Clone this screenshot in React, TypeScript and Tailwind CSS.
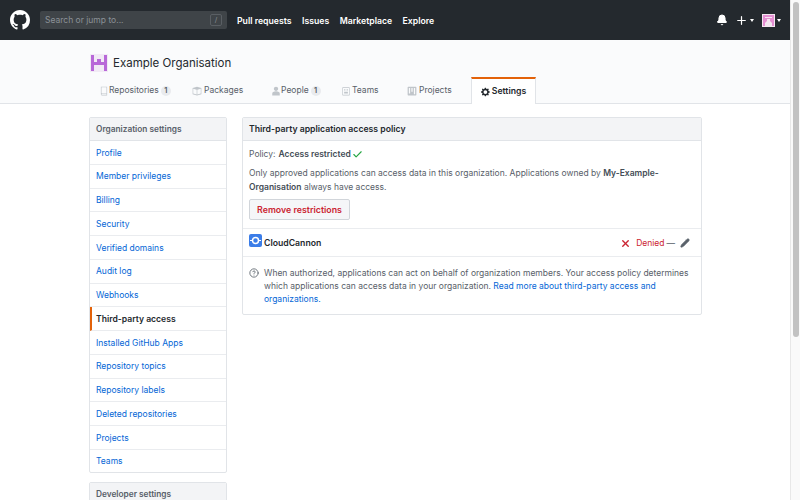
import { Bell, Check, CircleHelp, Pencil, Plus, X } from 'lucide-react'

const navItems = ['Pull requests', 'Issues', 'Marketplace', 'Explore']

const settingsItems = [
  'Profile',
  'Member privileges',
  'Billing',
  'Security',
  'Verified domains',
  'Audit log',
  'Webhooks',
  'Third-party access',
  'Installed GitHub Apps',
  'Repository topics',
  'Repository labels',
  'Deleted repositories',
  'Projects',
  'Teams',
]

function GithubMark() {
  return (
    <svg viewBox="0 0 16 16" className="w-5 h-5 fill-white">
      <path d="M8 0C3.58 0 0 3.58 0 8c0 3.54 2.29 6.53 5.47 7.59.4.07.55-.17.55-.38 0-.19-.01-.82-.01-1.49-2.01.37-2.53-.49-2.69-.94-.09-.23-.48-.94-.82-1.13-.28-.15-.68-.52-.01-.53.63-.01 1.08.58 1.23.82.72 1.21 1.87.87 2.33.66.07-.52.28-.87.51-1.07-1.78-.2-3.64-.89-3.64-3.95 0-.87.31-1.59.82-2.15-.08-.2-.36-1.02.08-2.12 0 0 .67-.21 2.2.82.64-.18 1.32-.27 2-.27s1.36.09 2 .27c1.53-1.04 2.2-.82 2.2-.82.44 1.1.16 1.92.08 2.12.51.56.82 1.27.82 2.15 0 3.07-1.87 3.75-3.65 3.95.29.25.54.73.54 1.48 0 1.07-.01 1.93-.01 2.2 0 .21.15.46.55.38A8.01 8.01 0 0 0 16 8c0-4.42-3.58-8-8-8z" />
    </svg>
  )
}

function Caret() {
  return <span className="ml-[2px] mt-[1px] border-x-[2.5px] border-t-[3px] border-x-transparent border-t-white" />
}

function TabIcon({ d }: { d: string }) {
  return (
    <svg viewBox="0 0 16 16" className="w-[10px] h-[10px] fill-[#c0c5ca] shrink-0">
      <path fillRule="evenodd" d={d} />
    </svg>
  )
}

function Counter({ n }: { n: number }) {
  return (
    <span className="ml-[2px] w-[10px] h-[10px] rounded-full bg-[#e9ebee] text-[7.5px] font-semibold leading-[10px] text-center text-[#586069]">
      {n}
    </span>
  )
}

const repoIcon = 'M3 1h10v14H5a2 2 0 0 1-2-2V1zm1 1v9h8V2H4zm1 10a1 1 0 0 0 0 2h7v-2H5z'
const packageIcon = 'M1 3l7-2 7 2v10l-7 2-7-2V3zm1 1.5V12l5.5 1.6V6L2 4.5zm12 0L8.500 6v7.600L14 12V4.500z'
const peopleIcon = 'M8 1a3.500 3.500 0 0 1 3.500 3.500C11.500 6.500 10 8 8 8S4.500 6.500 4.500 4.500A3.500 3.500 0 0 1 8 1zM2 15v-3c0-2 2-3.500 6-3.500s6 1.500 6 3.500v3H2z'
const teamsIcon = 'M3 2h10a1 1 0 0 1 1 1v11a1 1 0 0 1-1 1H3a1 1 0 0 1-1-1V3a1 1 0 0 1 1-1zm0 1v11h10V3H3zm2 2h2v2H5V5zm4 0h2v2H9V5zM5 9h6v3H5V9z'
const projectsIcon = 'M2 1h12a1 1 0 0 1 1 1v12a1 1 0 0 1-1 1H2a1 1 0 0 1-1-1V2a1 1 0 0 1 1-1zm1 2v9h2V3H3zm4 0v6h2V3H7zm4 0v10h2V3h-2z'

export default function App() {
  return (
    <div className="flex h-[500px] w-[800px] overflow-hidden bg-white font-['Inter',sans-serif] text-[8.5px] leading-[13.3px] text-[#24292e]">
      <div className="w-[790px] shrink-0">
        {/* Top nav */}
        <header className="h-10 bg-[#24292e] flex items-center pl-[10px] pr-[9px] text-white">
          <GithubMark />
          <div className="ml-[10px] w-[187px] h-[18px] rounded-[2px] bg-[#3f4448] flex items-center justify-between px-[5px] text-[#8b9197]">
            <span className="pt-[2px]">Search or jump to...</span>
            <span className="w-3 h-3 rounded-[2px] border border-[#5a5f64] text-[7px] leading-[10px] text-center">/</span>
          </div>
          <nav className="ml-[10px] mt-[3px] flex gap-[10.5px] font-semibold text-[8.7px]">
            {navItems.map((item) => (
              <span key={item}>{item}</span>
            ))}
          </nav>
          <div className="ml-auto flex items-center">
            <Bell className="w-3 h-3 fill-white" strokeWidth={2} />
            <Plus className="ml-[7px] w-[13px] h-[13px]" strokeWidth={2.25} />
            <Caret />
            <svg viewBox="0 0 13 13" className="ml-[8px] w-[13px] h-[13px]">
              <rect width="13" height="13" fill="#f4e6f0" />
              <path fill="#e58fd2" d="M1 1h11v11h-2V9L8 7V5H5v2L3 9v3H1z" />
              <rect x="3" y="3" width="7" height="1" fill="#f8e8f4" />
            </svg>
            <Caret />
          </div>
        </header>

        {/* Org subhead */}
        <div className="h-[64px] bg-[#fafbfc] border-b border-[#e1e4e8] pl-[90px]">
          <div className="flex items-center pt-[10px] h-[36px]">
            <svg viewBox="0 0 18 18" className="w-[18px] h-[18px]">
              <rect width="18" height="18" fill="#f1eaf5" />
              <path fill="#b868d8" d="M1 1h3v7h3V5h4v3h3V1h3v16h-3v-6H4v6H1z" />
            </svg>
            <span className="ml-[5px] text-[11.5px] leading-[18px] text-[#24292e]">Example Organisation</span>
          </div>
          <div className="flex items-end h-[27px] text-[#586069]">
            <div className="flex items-center h-[27px] pl-[9px] pt-[3px] w-[102px]">
              <TabIcon d={repoIcon} />
              <span>Repositories</span>
              <Counter n={1} />
            </div>
            <div className="flex items-center h-[27px] pt-[3px] w-[79px]">
              <TabIcon d={packageIcon} />
              <span className="ml-[2px]">Packages</span>
            </div>
            <div className="flex items-center h-[27px] pt-[3px] w-[70px]">
              <TabIcon d={peopleIcon} />
              <span>People</span>
              <Counter n={1} />
            </div>
            <div className="flex items-center h-[27px] pt-[3px] w-[66px]">
              <TabIcon d={teamsIcon} />
              <span className="ml-[1px]">Teams</span>
            </div>
            <div className="flex items-center h-[27px] pt-[3px] w-[64px]">
              <TabIcon d={projectsIcon} />
              <span className="ml-[2px]">Projects</span>
            </div>
            <div className="relative z-10 flex items-center justify-center h-[27px] w-[65px] -mb-px bg-white border-x border-[#e1e4e8] border-t-2 border-t-[#e36209] font-semibold text-[8.7px] text-[#24292e]">
              <svg viewBox="0 0 16 16" className="w-[10px] h-[10px] fill-[#24292e] mr-[1px]">
                <path
                  fillRule="evenodd"
                  d="M14 8.770V7.170l-1.940-.640-.450-1.090.880-1.840-1.130-1.130-1.810.910-1.090-.450-.690-1.920H6.170L5.540 2.950l-1.100.450-1.830-.880-1.130 1.130.910 1.810-.450 1.090L0.020 7.230V8.830l1.940.640.450 1.090-.880 1.840 1.130 1.130 1.810-.910 1.090.450.690 1.920h1.590l.630-1.940 1.100-.450 1.840.880 1.130-1.130-.920-1.810.470-1.090L14 8.770zM7 11a3 3 0 1 1 0-6 3 3 0 0 1 0 6z"
                />
              </svg>
              Settings
            </div>
          </div>
        </div>

        <div className="flex gap-[15px] pl-[89px] pt-[13px]">
          {/* Sidebar */}
          <aside className="w-[138px] shrink-0">
            <div className="border border-[#e1e4e8] rounded-[2px] overflow-hidden">
              <div className="h-[23px] pt-[2px] bg-[#f3f4f6] border-b border-[#e1e4e8] px-[6px] flex items-center font-semibold text-[8.3px] text-[#586069]">
                Organization settings
              </div>
              {settingsItems.map((item) => {
                const active = item === 'Third-party access'
                return (
                  <div
                    key={item}
                    className={
                      active
                        ? 'h-[23.75px] pt-[2px] flex items-center pl-[4px] border-l-2 border-l-[#e36209] border-b border-b-[#eaecef] font-semibold text-[8.6px] text-[#24292e]'
                        : 'h-[23.75px] pt-[2px] flex items-center px-[6px] border-b border-[#eaecef] last:border-b-0 last:h-[22.5px] text-[#0366d6]'
                    }
                  >
                    {item}
                  </div>
                )
              })}
            </div>
            <div className="mt-[9px] border border-[#e1e4e8] rounded-[2px] overflow-hidden">
              <div className="h-[23px] bg-[#f3f4f6] border-b border-[#e1e4e8] px-[6px] flex items-center font-semibold text-[8.3px] text-[#586069]">
                Developer settings
              </div>
            </div>
          </aside>

          {/* Policy box */}
          <main className="w-[460px]">
            <div className="border border-[#e1e4e8] rounded-[2px] overflow-hidden">
              <div className="h-[23px] pt-[2px] bg-[#f3f4f6] border-b border-[#e1e4e8] px-[6px] flex items-center font-semibold text-[8.7px]">
                Third-party application access policy
              </div>
              <div className="px-[6px] pt-[7px] pb-[8px] border-b border-[#eaecef] text-[#586069]">
                <p className="flex items-center">
                  Policy:
                  <span className="ml-[3px] font-semibold text-[#444d56]">Access restricted</span>
                  <Check className="ml-[1px] w-[11px] h-[11px] text-[#28a745]" strokeWidth={2.5} />
                </p>
                <p className="mt-[6px] w-[440px]">
                  Only approved applications can access data in this organization. Applications owned by{' '}
                  <span className="font-semibold text-[#444d56]">My-Example-Organisation</span> always have access.
                </p>
                <button className="mt-[5px] h-[21px] w-[101px] rounded-[2px] border border-[#d1d5da] bg-[#f5f6f8] font-semibold text-[8.8px] text-[#cb2431]">
                  Remove restrictions
                </button>
              </div>
              <div className="h-[28px] pl-[6px] pr-[11px] border-b border-[#eaecef] flex items-center">
                <svg viewBox="0 0 13 13" className="w-[13px] h-[13px] -mt-[3px]">
                  <rect width="13" height="13" rx="2" fill="#3b7de8" />
                  <circle cx="6.500" cy="6.500" r="3" fill="none" stroke="#fff" strokeWidth="1.500" />
                  <rect x="1" y="6" width="2" height="1" fill="#fff" />
                  <rect x="10" y="6" width="2" height="1" fill="#fff" />
                </svg>
                <span className="ml-[2px] mt-[3px] font-semibold text-[8.7px]">CloudCannon</span>
                <X className="ml-auto mt-[2px] w-[11px] h-[11px] text-[#cb2431]" strokeWidth={3} />
                <span className="ml-[5px] mt-[3px] text-[#cb2431]">Denied</span>
                <span className="ml-[2px] mt-[3px] text-[#586069]">—</span>
                <Pencil className="ml-[5px] mt-[2px] w-[10px] h-[10px] fill-[#586069] text-[#586069]" />
              </div>
              <div className="relative pl-[21px] pr-[6px] pt-[10px] pb-[7px] text-[#586069]">
                <CircleHelp className="absolute left-[6px] top-[11px] w-[10px] h-[10px]" />
                When authorized, applications can act on behalf of organization members. Your access policy determines
                which applications can access data in your organization.{' '}
                <span className="text-[#0366d6]">Read more about third-party access and organizations.</span>
              </div>
            </div>
          </main>
        </div>
      </div>

      {/* Scrollbar */}
      <div className="w-[10px] bg-[#fafafa] border-l border-[#e8e8e8] flex justify-center pt-[2px]">
        <div className="w-[6px] h-[335px] rounded-full bg-[#c2c2c2]" />
      </div>
    </div>
  )
}
